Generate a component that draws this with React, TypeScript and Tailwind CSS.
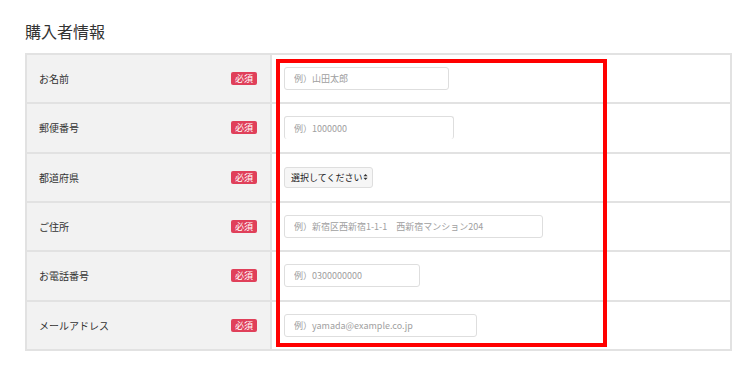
import React from 'react';

interface Field {
  label: string;
  placeholder?: string;
  width?: number;
  select?: boolean;
  noBottom?: boolean;
}

const fields: Field[] = [
  { label: 'お名前', placeholder: '例）山田太郎', width: 165 },
  { label: '郵便番号', placeholder: '例）1000000', width: 170, noBottom: true },
  { label: '都道府県', select: true },
  { label: 'ご住所', placeholder: '例）新宿区西新宿1-1-1　西新宿マンション204', width: 259 },
  { label: 'お電話番号', placeholder: '例）0300000000', width: 136 },
  { label: 'メールアドレス', placeholder: '例）yamada@example.co.jp', width: 193 },
];

const Badge = () => (
  <span className="inline-flex items-center justify-center w-[26px] h-[13px] rounded-[2px] bg-[#e0405a] text-white text-[9px] leading-none">
    必須
  </span>
);

const SelectBox = () => (
  <div className="flex items-center whitespace-nowrap h-[21px] w-[89px] pl-[6px] pr-[2px] rounded-[3px] border border-[#dedede] bg-[#f6f6f6] text-[9px] text-[#222]">
    <span>選択してください</span>
    <svg width="5" height="8" viewBox="0 0 6 9" className="ml-[1px] shrink-0">
      <path d="M0.5 3.5 L3 0.8 L5.5 3.5 Z" fill="#333" />
      <path d="M0.5 5.5 L3 8.2 L5.5 5.5 Z" fill="#333" />
    </svg>
  </div>
);

export default function App() {
  return (
    <div
      className="relative w-[754px] h-[374px] bg-white"
      style={{ fontFamily: '"Noto Sans CJK JP", "Noto Sans", sans-serif' }}
    >
      <h2 className="pl-[25px] pt-[21px] text-[16px] leading-[20px] text-[#333] font-normal">購入者情報</h2>

      <div className="mt-[12px] ml-[25px] w-[707px] border-2 border-[#e2e2e2]">
        {fields.map((f, i) => {
          const last = i === fields.length - 1;
          return (
            <div
              key={f.label}
              className={`flex ${last ? 'h-[47.33px]' : 'h-[49.33px] border-b-2 border-[#e2e2e2]'}`}
            >
              <div className="w-[245px] flex items-center justify-between pl-[12px] pr-[13px] bg-[#f2f2f2] border-r-2 border-[#e2e2e2]">
                <span className="text-[10px] text-[#333]">{f.label}</span>
                <Badge />
              </div>
              <div className="flex-1 flex items-center pl-[12px]">
                {f.select ? (
                  <SelectBox />
                ) : (
                  <input
                    readOnly
                    placeholder={f.placeholder}
                    style={{ width: f.width }}
                    className={`h-[23px] px-[9px] rounded-[3px] border border-[#dedede] ${f.noBottom ? 'border-b-0' : ''} bg-white text-[9px] text-[#333] placeholder:text-[#a0a0a0] outline-none`}
                  />
                )}
              </div>
            </div>
          );
        })}
      </div>

      {/* red annotation frame */}
      <div className="absolute left-[276px] top-[59px] w-[331px] h-[288px] border-4 border-[#ff0000] pointer-events-none" />
    </div>
  );
}
